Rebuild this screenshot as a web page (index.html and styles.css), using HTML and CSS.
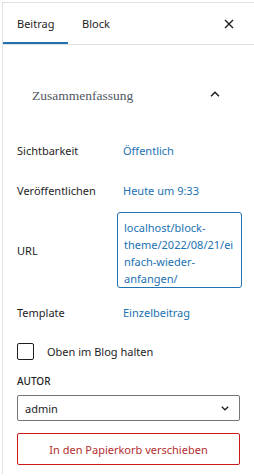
FILE: index.html
```html
<!DOCTYPE html>
<html lang="de">
<head>
<meta charset="utf-8">
<link rel="stylesheet" href="styles.css">
</head>
<body>
<div class="panel">
  <div class="header">
    <div class="tabs">
      <div class="tab active">Beitrag</div>
      <div class="tab">Block</div>
    </div>
    <div class="close">
      <svg width="10" height="10" viewBox="0 0 10 10"><path d="M1 1L9 9M9 1L1 9" stroke="#1e1e1e" stroke-width="1.4" fill="none"/></svg>
    </div>
  </div>
  <div class="content">
    <div class="section-title">
      <span class="title-text">Zusammenfassung</span>
      <svg class="chev" width="10" height="6" viewBox="0 0 10 6"><path d="M1 5.2L5 1.2L9 5.2" stroke="#1e1e1e" stroke-width="1.5" fill="none"/></svg>
    </div>
    <div class="row r1"><span class="label">Sichtbarkeit</span><span class="value">Öffentlich</span></div>
    <div class="row r2"><span class="label">Veröffentlichen</span><span class="value">Heute um 9:33</span></div>
    <div class="row r3"><span class="label">URL</span><span class="urlbox">localhost/block-<br>theme/2022/08/21/ei<br>nfach-wieder-<br>anfangen/</span></div>
    <div class="row r4"><span class="label">Template</span><span class="value">Einzelbeitrag</span></div>
    <div class="check"><span class="box"></span><span class="check-label">Oben im Blog halten</span></div>
    <div class="autor">AUTOR</div>
    <div class="select"><span>admin</span>
      <svg width="8" height="5" viewBox="0 0 8 5"><path d="M0.8 0.8L4 3.8L7.2 0.8" stroke="#1e1e1e" stroke-width="1.3" fill="none"/></svg>
    </div>
    <div class="trash">In den Papierkorb verschieben</div>
  </div>
</div>
</body>
</html>
```
FILE: styles.css
```css
html, body { margin: 0; padding: 0; background: #fff; }
body {
  font-family: "Noto Sans", "Open Sans", sans-serif;
  font-size: 11px;
  color: #1e1e1e;
  padding: 2px 0 0 2px;
  height: 474px;
  box-sizing: border-box;
}
.panel {
  border-top: 1px solid #e0e0e0;
  border-left: 1px solid #e0e0e0;
  height: 100%;
}
.header {
  display: flex;
  align-items: stretch;
  justify-content: space-between;
  height: 41px;
  border-bottom: 1px solid #e0e0e0;
}
.tabs { display: flex; }
.tab {
  padding: 0 13px 0 14px;
  display: flex;
  align-items: center;
  box-sizing: border-box;
  border-bottom: 2px solid transparent;
  padding-top: 2px;
}
.tab.active { border-bottom-color: #2271b1; width: 65px; }
.close {
  width: 28px;
  margin-right: 11px;
  display: flex;
  align-items: center;
  justify-content: center;
  padding-top: 1px;
}
.content { padding: 0 14px; }
.section-title {
  display: flex;
  justify-content: space-between;
  align-items: center;
  height: 36px;
  margin-top: 33px;
  padding: 0 20px 0 15px;
}
.title-text {
  font-family: "Liberation Serif", serif;
  font-size: 13.5px;
  color: #50575e;
}
.chev { margin-top: -4px; }
.row { display: flex; align-items: center; }
.label { width: 106px; flex: none; }
.value { color: #2271b1; }
.r1 { height: 36px; margin-top: 18px; }
.r2 { height: 36px; margin-top: 4px; }
.r3 { margin-top: 4px; }
.urlbox {
  color: #2271b1;
  border: 1.5px solid #2271b1;
  border-radius: 3px;
  padding: 6px 6px 0 6px;
  line-height: 17px;
  margin-left: -6px;
  margin-right: -2px;
  flex: 1;
  min-width: 0;
  white-space: nowrap;
}
.r4 { height: 36px; margin-top: 6px; }
.check {
  display: flex;
  align-items: center;
  margin-top: 12px;
  height: 18px;
}
.box {
  width: 17px; height: 17px;
  border: 1px solid #1e1e1e;
  border-radius: 2px;
  box-sizing: border-box;
  margin-right: 13px;
}
.autor {
  font-size: 10px;
  font-weight: 500;
  margin-top: 14px;
  line-height: 14px;
}
.select {
  margin-top: 7px;
  height: 26px;
  box-sizing: border-box;
  border: 1px solid #757575;
  border-radius: 2px;
  display: flex;
  align-items: center;
  justify-content: space-between;
  padding: 0 10px 0 7px;
}
.trash {
  margin-top: 12px;
  height: 32px;
  box-sizing: border-box;
  border: 1px solid #cc1818;
  border-radius: 2px;
  display: flex;
  align-items: center;
  justify-content: center;
  color: #b32d2e;
}
```
